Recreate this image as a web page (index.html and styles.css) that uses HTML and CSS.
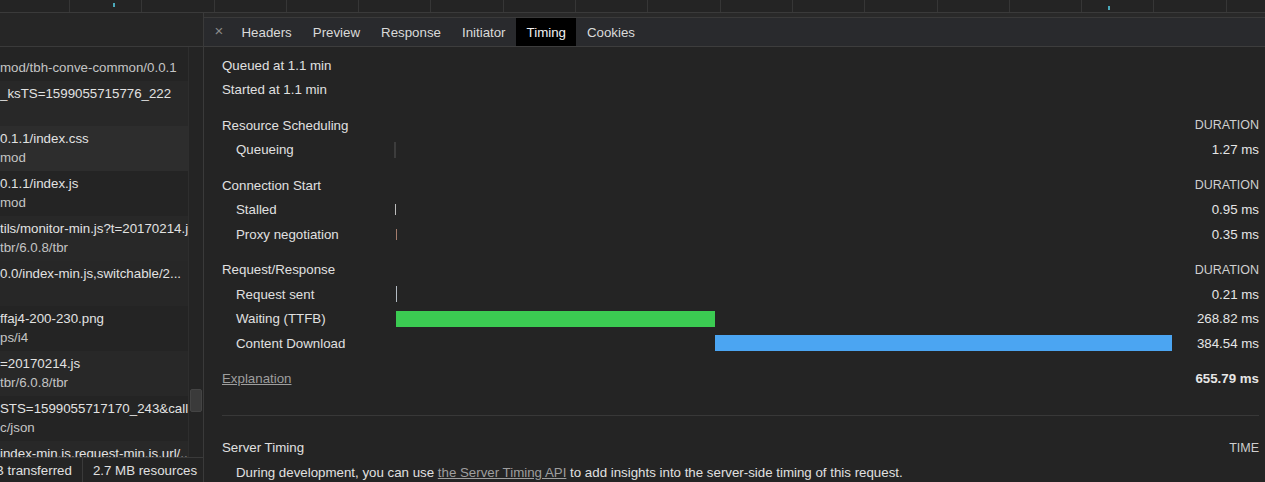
FILE: index.html
```html
<!DOCTYPE html>
<html>
<head>
<meta charset="utf-8">
<link rel="stylesheet" href="styles.css">
</head>
<body>
<div class="overview">
  <div class="ov-cell"></div><div class="ov-cell"></div><div class="ov-cell"></div><div class="ov-cell"></div>
  <div class="ov-cell"></div><div class="ov-cell"></div><div class="ov-cell"></div><div class="ov-cell"></div>
  <div class="ov-cell"></div><div class="ov-cell"></div><div class="ov-cell"></div><div class="ov-cell"></div>
  <div class="ov-cell"></div><div class="ov-cell"></div><div class="ov-cell"></div><div class="ov-cell"></div>
  <div class="ov-cell"></div><div class="ov-cell"></div>
  <span class="ov-mark ov-mark-a"></span>
  <span class="ov-mark ov-mark-b"></span>
</div>
<div class="main">
  <aside class="reqs">
    <div class="reqs-head"></div>
    <div class="reqs-body">
      <div class="reqs-list">
        <div class="req partial"><div class="req-path">mod/tbh-conve-common/0.0.1</div></div>
        <div class="req alt"><div class="req-name">_ksTS=1599055715776_222</div><div class="req-path"></div></div>
        <div class="req sel"><div class="req-name">0.1.1/index.css</div><div class="req-path">mod</div></div>
        <div class="req"><div class="req-name">0.1.1/index.js</div><div class="req-path">mod</div></div>
        <div class="req alt"><div class="req-name">tils/monitor-min.js?t=20170214.js</div><div class="req-path">tbr/6.0.8/tbr</div></div>
        <div class="req alt2"><div class="req-name">0.0/index-min.js,switchable/2...</div><div class="req-path"></div></div>
        <div class="req"><div class="req-name">ffaj4-200-230.png</div><div class="req-path">ps/i4</div></div>
        <div class="req alt"><div class="req-name">=20170214.js</div><div class="req-path">tbr/6.0.8/tbr</div></div>
        <div class="req"><div class="req-name">STS=1599055717170_243&amp;call...</div><div class="req-path">c/json</div></div>
        <div class="req alt"><div class="req-name">index-min.js,request-min.js,url/...</div><div class="req-path"></div></div>
      </div>
      <div class="scrollbar"><div class="thumb"></div></div>
    </div>
    <div class="reqs-foot">
      <span class="foot-item first">B transferred</span>
      <span class="foot-item">2.7 MB resources</span>
    </div>
  </aside>
  <section class="detail">
    <div class="detail-top"></div>
    <nav class="tabs">
      <span class="tab-close">×</span>
      <span class="tab">Headers</span>
      <span class="tab">Preview</span>
      <span class="tab">Response</span>
      <span class="tab">Initiator</span>
      <span class="tab active">Timing</span>
      <span class="tab">Cookies</span>
    </nav>
    <div class="timing">
      <div class="trow"><span class="lbl">Queued at 1.1 min</span></div>
      <div class="trow"><span class="lbl">Started at 1.1 min</span></div>

      <div class="trow head"><span class="lbl">Resource Scheduling</span><span></span><span class="dur cap">DURATION</span></div>
      <div class="trow sub"><span class="lbl">Queueing</span><span class="track"><span class="bar queueing" style="margin-left:0%;width:0.26%"></span></span><span class="dur">1.27 ms</span></div>

      <div class="trow head"><span class="lbl">Connection Start</span><span></span><span class="dur cap">DURATION</span></div>
      <div class="trow sub"><span class="lbl">Stalled</span><span class="track"><span class="bar stalled" style="margin-left:0.13%;width:0.13%"></span></span><span class="dur">0.95 ms</span></div>
      <div class="trow sub"><span class="lbl">Proxy negotiation</span><span class="track"><span class="bar proxy" style="margin-left:0.26%;width:0.13%"></span></span><span class="dur">0.35 ms</span></div>

      <div class="trow head"><span class="lbl">Request/Response</span><span></span><span class="dur cap">DURATION</span></div>
      <div class="trow sub"><span class="lbl">Request sent</span><span class="track"><span class="bar sending" style="margin-left:0.26%;width:0.13%"></span></span><span class="dur">0.21 ms</span></div>
      <div class="trow sub"><span class="lbl">Waiting (TTFB)</span><span class="track"><span class="bar waiting" style="margin-left:0.26%;width:40.95%"></span></span><span class="dur">268.82 ms</span></div>
      <div class="trow sub"><span class="lbl">Content Download</span><span class="track"><span class="bar download" style="margin-left:41.21%;width:58.66%"></span></span><span class="dur">384.54 ms</span></div>

      <div class="trow head"><span class="lbl"><a class="link">Explanation</a></span><span></span><span class="dur total">655.79 ms</span></div>

      <hr class="sep">

      <div class="trow"><span class="lbl">Server Timing</span><span></span><span class="dur cap">TIME</span></div>
      <div class="trow sub"><span class="lbl wide">During development, you can use <a class="link">the Server Timing API</a> to add insights into the server-side timing of this request.</span></div>
    </div>
  </section>
</div>
</body>
</html>
```

FILE: styles.css
```css
* { box-sizing: border-box; }
html, body {
  margin: 0;
  padding: 0;
  background: #242424;
  height: 482px;
  overflow: hidden;
}
body {
  font-family: "Liberation Sans", Arial, sans-serif;
  font-size: 13.3px;
  color: #e0e0e0;
}

/* overview strip */
.overview {
  position: relative;
  display: flex;
  height: 13px;
  border-bottom: 1px solid #3a3a3a;
  margin-left: -2.3px;
  overflow: hidden;
}
.ov-cell {
  flex: 0 0 72.3px;
  border-right: 1px solid #363636;
}
.ov-mark {
  position: absolute;
  width: 2px;
  height: 4px;
  background: #4aa9ba;
}
.ov-mark-a { left: 115px; top: 3px; }
.ov-mark-b { left: 1110px; top: 6px; }

.main {
  display: flex;
  height: 469px;
}

/* request list */
.reqs {
  width: 204px;
  flex: 0 0 204px;
  border-right: 1px solid #3a3a3a;
  display: flex;
  flex-direction: column;
  background: #242424;
}
.reqs-head {
  height: 34px;
  flex: 0 0 34px;
  background: #262626;
  border-bottom: 1px solid #3a3a3a;
}
.reqs-body {
  flex: 1;
  display: flex;
  overflow: hidden;
}
.reqs-list {
  flex: 1;
  overflow: hidden;
}
.req {
  height: 45px;
  padding: 3px 0 4px;
  line-height: 19px;
  white-space: nowrap;
  overflow: hidden;
  background: #242424;
}
.req.partial {
  height: 34px;
  padding-top: 11px;
}
.req.alt { background: #282828; }
.req.alt2 { background: #272727; }
.req.sel { background: #2d2d2d; }
.req-name { color: #e2e2e2; }
.req-path { color: #c4c4c4; height: 19px; }

.scrollbar {
  flex: 0 0 15px;
  border-left: 1px solid #2e2e2e;
  background: #242424;
  position: relative;
}
.thumb {
  position: absolute;
  left: 1px;
  right: 1px;
  top: 342px;
  height: 23px;
  background: #3a3a3a;
  border: 1px solid #444;
  border-radius: 2px;
}
.reqs-foot {
  flex: 0 0 25px;
  border-top: 1px solid #3a3a3a;
  display: flex;
  align-items: stretch;
  white-space: nowrap;
  overflow: hidden;
  color: #e0e0e0;
}
.foot-item {
  display: flex;
  align-items: center;
  padding: 0 10px 0 0;
}
.foot-item.first { margin-left: -5px; }
.foot-item + .foot-item {
  border-left: 1px solid #3a3a3a;
  padding-left: 10px;
}

/* detail */
.detail {
  flex: 1;
  display: flex;
  flex-direction: column;
  min-width: 0;
}
.detail-top {
  height: 5px;
  flex: 0 0 5px;
  background: #292929;
  border-bottom: 1px solid #3a3a3a;
}
.tabs {
  display: flex;
  align-items: stretch;
  height: 29px;
  flex: 0 0 29px;
  background: #292a2d;
  border-bottom: 1px solid #3d3d3d;
}
.tab-close {
  width: 27px;
  display: flex;
  align-items: center;
  justify-content: center;
  color: #8a8a8a;
  font-size: 15px;
  padding: 0 0 3px 3px;
}
.tab {
  display: flex;
  align-items: center;
  padding: 0 10.5px;
  color: #dadada;
}
.tab.active {
  background: #000;
  color: #f2f2f2;
}

.timing {
  padding: 6px 6px 0 18px;
}
.trow {
  display: grid;
  grid-template-columns: 172px 1fr 86px;
  align-items: center;
  height: 24.5px;
  white-space: nowrap;
}
.trow.head { margin-top: 11px; }
.trow.sub .lbl { padding-left: 14px; }
.lbl.wide { grid-column: 1 / 4; }
.dur { text-align: right; color: #e6e6e6; }
.dur.cap { color: #cfcfcf; font-size: 12.5px; }
.dur.total { font-weight: bold; }
.link {
  color: #9e9e9e;
  text-decoration: underline;
  cursor: pointer;
}
.track {
  display: flex;
  align-items: center;
  height: 100%;
}
.bar {
  display: block;
  height: 16px;
}
.bar.queueing { background: #3c3c3c; min-width: 2px; }
.bar.stalled { background: #bdbdbd; height: 11px; min-width: 1px; }
.bar.proxy { background: #a47c6c; height: 11px; min-width: 1px; }
.bar.sending { background: #b4bcc4; min-width: 1px; }
.bar.waiting { background: #3bcb52; }
.bar.download { background: #4ba5f2; }

.sep {
  border: 0;
  border-top: 1px solid #383838;
  margin: 23.5px 0 20px 0;
  height: 0;
}
```
